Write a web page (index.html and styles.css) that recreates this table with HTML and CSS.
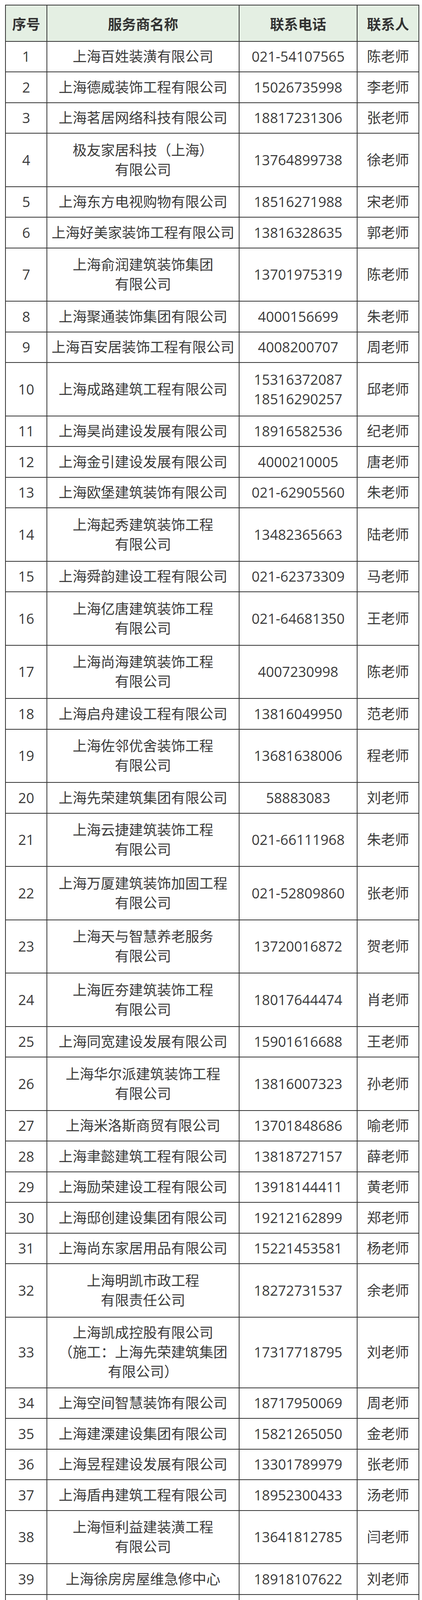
FILE: index.html
```html
<!DOCTYPE html>
<html lang="zh-CN">
<head>
<meta charset="utf-8">
<title>服务商名单</title>
<link rel="stylesheet" href="styles.css">
</head>
<body>
<div class="page">
<div class="sheet" role="table">
<div class="row head" role="row"><div>序号</div><div>服务商名称</div><div>联系电话</div><div>联系人</div></div>
<div class="row one" role="row"><div>1</div><div>上海百姓装潢有限公司</div><div>021-54107565</div><div>陈老师</div></div>
<div class="row one" role="row"><div>2</div><div>上海德威装饰工程有限公司</div><div>15026735998</div><div>李老师</div></div>
<div class="row one" role="row"><div>3</div><div>上海茗居网络科技有限公司</div><div>18817231306</div><div>张老师</div></div>
<div class="row two" role="row"><div>4</div><div>极友家居科技（上海）<br>有限公司</div><div>13764899738</div><div>徐老师</div></div>
<div class="row one" role="row"><div>5</div><div>上海东方电视购物有限公司</div><div>18516271988</div><div>宋老师</div></div>
<div class="row one" role="row"><div>6</div><div>上海好美家装饰工程有限公司</div><div>13816328635</div><div>郭老师</div></div>
<div class="row two" role="row"><div>7</div><div>上海俞润建筑装饰集团<br>有限公司</div><div>13701975319</div><div>陈老师</div></div>
<div class="row one" role="row"><div>8</div><div>上海聚通装饰集团有限公司</div><div>4000156699</div><div>朱老师</div></div>
<div class="row one" role="row"><div>9</div><div>上海百安居装饰工程有限公司</div><div>4008200707</div><div>周老师</div></div>
<div class="row two" role="row"><div>10</div><div>上海成路建筑工程有限公司</div><div>15316372087<br>18516290257</div><div>邱老师</div></div>
<div class="row one" role="row"><div>11</div><div>上海昊尚建设发展有限公司</div><div>18916582536</div><div>纪老师</div></div>
<div class="row one" role="row"><div>12</div><div>上海金引建设发展有限公司</div><div>4000210005</div><div>唐老师</div></div>
<div class="row one" role="row"><div>13</div><div>上海欧堡建筑装饰有限公司</div><div>021-62905560</div><div>朱老师</div></div>
<div class="row two" role="row"><div>14</div><div>上海起秀建筑装饰工程<br>有限公司</div><div>13482365663</div><div>陆老师</div></div>
<div class="row one" role="row"><div>15</div><div>上海舜韵建设工程有限公司</div><div>021-62373309</div><div>马老师</div></div>
<div class="row two" role="row"><div>16</div><div>上海亿唐建筑装饰工程<br>有限公司</div><div>021-64681350</div><div>王老师</div></div>
<div class="row two" role="row"><div>17</div><div>上海尚海建筑装饰工程<br>有限公司</div><div>4007230998</div><div>陈老师</div></div>
<div class="row one" role="row"><div>18</div><div>上海启舟建设工程有限公司</div><div>13816049950</div><div>范老师</div></div>
<div class="row two" role="row"><div>19</div><div>上海佐邻优舍装饰工程<br>有限公司</div><div>13681638006</div><div>程老师</div></div>
<div class="row one" role="row"><div>20</div><div>上海先荣建筑集团有限公司</div><div>58883083</div><div>刘老师</div></div>
<div class="row two" role="row"><div>21</div><div>上海云捷建筑装饰工程<br>有限公司</div><div>021-66111968</div><div>朱老师</div></div>
<div class="row two" role="row"><div>22</div><div>上海万厦建筑装饰加固工程<br>有限公司</div><div>021-52809860</div><div>张老师</div></div>
<div class="row two" role="row"><div>23</div><div>上海天与智慧养老服务<br>有限公司</div><div>13720016872</div><div>贺老师</div></div>
<div class="row two" role="row"><div>24</div><div>上海匠夯建筑装饰工程<br>有限公司</div><div>18017644474</div><div>肖老师</div></div>
<div class="row one" role="row"><div>25</div><div>上海同宽建设发展有限公司</div><div>15901616688</div><div>王老师</div></div>
<div class="row two" role="row"><div>26</div><div>上海华尔派建筑装饰工程<br>有限公司</div><div>13816007323</div><div>孙老师</div></div>
<div class="row one" role="row"><div>27</div><div>上海米洛斯商贸有限公司</div><div>13701848686</div><div>喻老师</div></div>
<div class="row one" role="row"><div>28</div><div>上海聿懿建筑工程有限公司</div><div>13818727157</div><div>薛老师</div></div>
<div class="row one" role="row"><div>29</div><div>上海励荣建设工程有限公司</div><div>13918144411</div><div>黄老师</div></div>
<div class="row one" role="row"><div>30</div><div>上海邸创建设集团有限公司</div><div>19212162899</div><div>郑老师</div></div>
<div class="row one" role="row"><div>31</div><div>上海尚东家居用品有限公司</div><div>15221453581</div><div>杨老师</div></div>
<div class="row two" role="row"><div>32</div><div>上海明凯市政工程<br>有限责任公司</div><div>18272731537</div><div>余老师</div></div>
<div class="row three" role="row"><div>33</div><div>上海凯成控股有限公司<br>（施工：上海先荣建筑集团<br>有限公司）</div><div>17317718795</div><div>刘老师</div></div>
<div class="row one" role="row"><div>34</div><div>上海空间智慧装饰有限公司</div><div>18717950069</div><div>周老师</div></div>
<div class="row one" role="row"><div>35</div><div>上海建溧建设集团有限公司</div><div>15821265050</div><div>金老师</div></div>
<div class="row one" role="row"><div>36</div><div>上海昱程建设发展有限公司</div><div>13301789979</div><div>张老师</div></div>
<div class="row one" role="row"><div>37</div><div>上海盾冉建筑工程有限公司</div><div>18952300433</div><div>汤老师</div></div>
<div class="row two" role="row"><div>38</div><div>上海恒利益建装潢工程<br>有限公司</div><div>13641812785</div><div>闫老师</div></div>
<div class="row one" role="row"><div>39</div><div>上海徐房房屋维急修中心</div><div>18918107622</div><div>刘老师</div></div>
<div class="row two" role="row"><div>40</div><div>上海浦东东方有线网络<br>有限公司</div><div>19201331018</div><div>金老师</div></div>
<div class="row two" role="row"><div>41</div><div>上海帷尔建筑装饰工程<br>有限公司</div><div>13482661525</div><div>李老师</div></div>
<div class="row one" role="row"><div>42</div><div>上海悠思脉科技有限公司</div><div>19301278489</div><div>应老师</div></div>
<div class="row one" role="row"><div>43</div><div>上海斯米克建材有限公司</div><div>13818155946</div><div>章老师</div></div>
<div class="row one" role="row"><div>44</div><div>上海策聆建设工程有限公司</div><div>13681824286</div><div>褚老师</div></div>
<div class="row two" role="row"><div>45</div><div>上海尊季健康服务有限公司</div><div>62109588-8007<br>13764128793</div><div>骆老师</div></div>
<div class="row three" role="row"><div>46</div><div>上海尊捷贸易有限公司<br>（施工：上海上装建筑装饰<br>工程有限公司）</div><div>13310111100</div><div>祝老师</div></div>
<div class="row one" role="row"><div>47</div><div>上海瑞霭智能科技有限公司</div><div>18916873871</div><div>陈老师</div></div>
<div class="row two" role="row"><div>48</div><div>上海蓝宫装饰设计工程<br>有限公司</div><div>021-59150746<br>18915753251</div><div>刘老师</div></div>
<div class="row one" role="row"><div>49</div><div>上海嘉加安建设工程有限公司</div><div>13761225020</div><div>王老师</div></div>
<div class="row one" role="row"><div>50</div><div>上海慕续建筑科技有限公司</div><div>13812745669</div><div>代老师</div></div>
<div class="row two" role="row"><div>51</div><div>先恩环境艺术设计工程(上海)<br>有限公司</div><div>021-64758851</div><div>韩老师</div></div>
<div class="row two" role="row"><div>52</div><div>南京福康通健康产业<br>有限公司上海分公司</div><div>18061773810</div><div>王老师</div></div>
<div class="row two" role="row"><div>53</div><div>浙江富海建筑装饰工程股份<br>有限公司上海分公司</div><div>18657206500</div><div>卢老师</div></div>
<div class="row one" role="row"><div>54</div><div>盖文(上海)建筑工程有限公司</div><div>13585580759</div><div>姜老师</div></div>
<div class="row three" role="row"><div>55</div><div>德际凯艾（上海）健康咨询<br>服务有限公司（施工：上海<br>晟国建筑工程有限公司）</div><div>13301663789</div><div>乔老师</div></div>
</div>
</div>
</body>
</html>
```

FILE: styles.css
```css
html, body {
  margin: 0;
  padding: 0;
  background: #ffffff;
}

.page {
  padding: 12.3px 0 0 13px;
}

.sheet {
  display: grid;
  grid-template-columns: 106px 492px 302px 158px;
  width: 1060px;
  box-sizing: border-box;
  border-top: 2px solid #333333;
  border-left: 2px solid #333333;
  font-family: "Open Sans", "Noto Sans CJK SC", sans-serif;
  font-size: 36px;
  line-height: 50px;
  color: #3b3b3b;
}

.row {
  display: contents;
}

.row > div {
  box-sizing: border-box;
  display: flex;
  align-items: center;
  justify-content: center;
  text-align: center;
  white-space: nowrap;
  overflow: hidden;
  border-right: 2px solid #333333;
  border-bottom: 2px solid #333333;
}

.head > div {
  height: 92.7px;
  background: #e4efe3;
  font-family: "Noto Sans CJK SC", sans-serif;
  font-weight: 700;
  color: #333333;
}

.one > div { height: 78.5px; }
.two > div { height: 136.5px; }
.three > div { height: 181px; }
```
